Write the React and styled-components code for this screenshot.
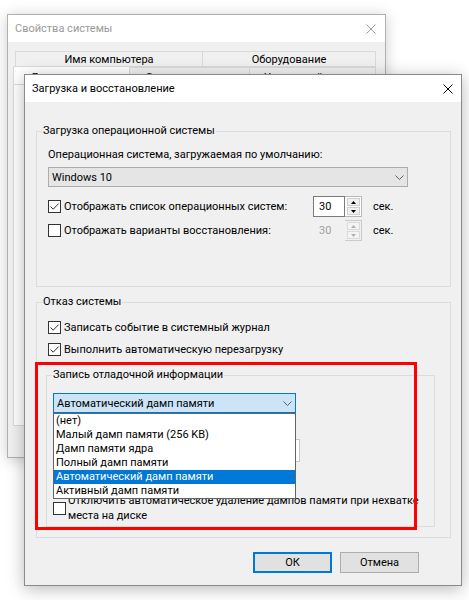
import React from 'react';
import styled, { createGlobalStyle } from 'styled-components';

const GlobalStyle = createGlobalStyle`
  * { box-sizing: border-box; }
  body {
    margin: 0;
    background: #fff;
    font-family: Roboto, "Segoe UI", sans-serif;
    font-size: 11px;
    color: #000;
  }
`;

const Desktop = styled.div`
  position: relative;
  width: 469px;
  height: 600px;
  overflow: hidden;
  background: #fff;
  white-space: nowrap;
`;

const BackWindow = styled.div`
  position: absolute;
  left: 7px;
  top: 14px;
  width: 379px;
  height: 444px;
  display: flex;
  flex-direction: column;
  background: #f0f0f0;
  border: 1px solid #b0b0b0;
  box-shadow: 0 2px 14px rgba(0, 0, 0, 0.2);
`;

const Dialog = styled.div`
  position: absolute;
  left: 24px;
  top: 74px;
  width: 438px;
  height: 512px;
  display: flex;
  flex-direction: column;
  background: #f0f0f0;
  border: 1px solid #8a8a8a;
  box-shadow: 0 3px 16px rgba(0, 0, 0, 0.28);
`;

const TitleBar = styled.div`
  flex: none;
  height: 27px;
  display: flex;
  align-items: center;
  justify-content: space-between;
  padding-left: 7px;
  background: #fff;
  color: ${p => (p.$inactive ? '#999' : '#000')};
`;

const CloseBox = styled.div`
  width: ${p => p.$w}px;
  height: 100%;
  display: flex;
  align-items: center;
  justify-content: center;
`;

const CloseIcon = ({ color }) => (
  <svg width="10" height="10" viewBox="0 0 10 10">
    <path d="M0.5 0.5 L9.5 9.5 M9.5 0.5 L0.5 9.5" stroke={color} strokeWidth="1" />
  </svg>
);

/* background window: tabs */
const TabArea = styled.div`
  padding: 9px 0 0 7px;
`;

const TabRow = styled.div`
  display: flex;
  height: ${p => p.$h}px;
  margin-left: ${p => p.$shift || 0}px;
`;

const Tab = styled.div`
  width: ${p => p.$w}px;
  display: flex;
  align-items: center;
  justify-content: center;
  background: ${p => (p.$active ? '#fff' : '#f0f0f0')};
  border: 1px solid #d9d9d9;
  margin-left: -1px;
  margin-top: ${p => (p.$active ? -1 : 0)}px;
  padding-top: ${p => (p.$low ? 3 : 0)}px;
  &:first-child { margin-left: 0; }
`;

const TabPanel = styled.div`
  margin-left: -2px;
  width: 364px;
  height: 341px;
  background: #fff;
  border: 1px solid #d9d9d9;
  border-top: none;
`;

/* dialog */
const Body = styled.div`
  position: relative;
  flex: 1;
  display: flex;
  flex-direction: column;
  padding: 21px 10px 0 11px;
`;

const Group = styled.fieldset`
  margin: ${p => p.$mt || 0}px ${p => p.$mr || 0}px 0 ${p => p.$ml || 0}px;
  padding: 0 0 ${p => p.$pb}px;
  border: 1px solid #dcdcdc;
  min-width: 0;
`;

const Legend = styled.legend`
  margin-left: 5px;
  padding: 0 1px;
  line-height: 16px;
`;

const GroupBody = styled.div`
  padding-left: ${p => p.$inset}px;
`;

const Text = styled.div`
  line-height: 16px;
  margin-top: ${p => p.$mt || 0}px;
`;

const Row = styled.div`
  display: flex;
  align-items: center;
  min-height: ${p => p.$h || 16}px;
  margin-top: ${p => p.$mt || 0}px;
`;

const LabelCell = styled.div`
  display: flex;
  align-items: center;
  width: ${p => p.$w}px;
`;

const Box = styled.span`
  flex: none;
  width: 13px;
  height: 13px;
  margin-right: ${p => p.$gap || 3}px;
  display: flex;
  align-items: center;
  justify-content: center;
  background: #fff;
  border: 1px solid #333;
`;

const Check = ({ checked, gap }) => (
  <Box $gap={gap}>
    {checked && (
      <svg width="11" height="11" viewBox="0 0 11 11">
        <path d="M1.5 5.5 L4.2 8.2 L9.6 2.6" fill="none" stroke="#333" strokeWidth="1" />
      </svg>
    )}
  </Box>
);

const Combo = styled.div`
  display: flex;
  align-items: center;
  justify-content: space-between;
  width: ${p => p.$w}px;
  height: 20px;
  margin-top: ${p => p.$mt || 0}px;
  padding: 0 3px 0 3px;
  background: ${p => (p.$focused ? '#cce4f7' : '#e5e5e5')};
  border: 1px solid ${p => (p.$focused ? '#0078d7' : '#adadad')};
`;

const Chevron = () => (
  <svg width="9" height="5" viewBox="0 0 9 5">
    <path d="M0.5 0.5 L4.5 4.5 L8.5 0.5" fill="none" stroke="#606060" strokeWidth="1" />
  </svg>
);

const ComboWrap = styled.div`
  position: relative;
  width: ${p => p.$w}px;
  margin-top: ${p => p.$mt || 0}px;
  z-index: 2;
`;

const DropList = styled.ul`
  position: absolute;
  top: 100%;
  left: 0;
  width: ${p => p.$w}px;
  margin: 0;
  padding: 0;
  list-style: none;
  background: #fff;
  border: 1px solid #646464;
`;

const Option = styled.li`
  height: 14px;
  line-height: 14px;
  padding-left: 2px;
  background: ${p => (p.$selected ? '#0078d7' : 'transparent')};
  color: ${p => (p.$selected ? '#fff' : '#000')};
`;

const Spin = styled.div`
  display: flex;
  height: 21px;
  width: 49px;
  border: 1px solid ${p => (p.$disabled ? '#cccccc' : '#b8b8b8')};
  background: ${p => (p.$disabled ? '#f0f0f0' : '#fff')};
`;

const SpinField = styled.div`
  width: 32px;
  padding-left: 5px;
  display: flex;
  align-items: center;
  border: 1px solid ${p => (p.$disabled ? 'transparent' : '#7a7a7a')};
  margin: -1px 0 -1px -1px;
  color: ${p => (p.$disabled ? '#a0a0a0' : '#000')};
  background: ${p => (p.$disabled ? '#f0f0f0' : '#fff')};
`;

const SpinButtons = styled.div`
  flex: 1;
  display: flex;
  flex-direction: column;
  gap: 1px;
  padding: 1px 1px 1px 2px;
`;

const SpinButton = styled.div`
  flex: 1;
  display: flex;
  align-items: center;
  justify-content: center;
  background: ${p => (p.$disabled ? '#f4f4f4' : '#f0f0f0')};
  border: 1px solid ${p => (p.$disabled ? '#dadada' : '#cfcfcf')};
`;

const Arrow = ({ down, color }) => (
  <svg width="5" height="3" viewBox="0 0 5 3">
    <path d={down ? 'M0 0 H5 L2.5 3 Z' : 'M0 3 H5 L2.5 0 Z'} fill={color} />
  </svg>
);

const Spinner = ({ value, disabled }) => {
  const color = disabled ? '#b0b0b0' : '#000';
  return (
    <Spin $disabled={disabled}>
      <SpinField $disabled={disabled}>{value}</SpinField>
      <SpinButtons>
        <SpinButton $disabled={disabled}><Arrow color={color} /></SpinButton>
        <SpinButton $disabled={disabled}><Arrow down color={color} /></SpinButton>
      </SpinButtons>
    </Spin>
  );
};

const Unit = styled.span`
  margin-left: 11px;
`;

// dump file field, almost entirely under the open list
const TextField = styled.div`
  width: ${p => p.$w}px;
  height: 23px;
  margin-top: ${p => p.$mt || 0}px;
  background: #fff;
  border: 1px solid #c8c8c8;
`;

const Wrap = styled.div`
  line-height: 15px;
`;

const ButtonRow = styled.div`
  display: flex;
  justify-content: flex-end;
  gap: 8px;
  margin-top: 14px;
  padding-right: 32px;
`;

const Button = styled.button`
  width: 79px;
  height: 21px;
  padding: 0;
  font: inherit;
  color: #000;
  background: #e1e1e1;
  border: ${p => (p.$primary ? '2px solid #0078d7' : '1px solid #adadad')};
`;

const Highlight = styled.div`
  position: absolute;
  left: 10px;
  top: 260px;
  width: 382px;
  height: 168px;
  border: 3px solid #ff0000;
  pointer-events: none;
  z-index: 3;
`;

const dumpOptions = [
  '(нет)',
  'Малый дамп памяти (256 KB)',
  'Дамп памяти ядра',
  'Полный дамп памяти',
  'Автоматический дамп памяти',
  'Активный дамп памяти',
];

export default function App() {
  return (
    <Desktop>
      <GlobalStyle />
      <BackWindow>
        <TitleBar $inactive>
          <span>Свойства системы</span>
          <CloseBox $w={28}><CloseIcon color="#999" /></CloseBox>
        </TitleBar>
        <TabArea>
          <TabRow $h={16}>
            <Tab $w={188}>Имя компьютера</Tab>
            <Tab $w={174}>Оборудование</Tab>
          </TabRow>
          <TabRow $h={18} $shift={-2}>
            <Tab $w={117} $active $low>Дополнительно</Tab>
            <Tab $w={121} $low>Защита системы</Tab>
            <Tab $w={127} $low>Удаленный доступ</Tab>
          </TabRow>
          <TabPanel />
        </TabArea>
      </BackWindow>

      <Dialog>
        <TitleBar>
          <span>Загрузка и восстановление</span>
          <CloseBox $w={26}><CloseIcon color="#000" /></CloseBox>
        </TitleBar>
        <Body>
          <Group $pb={45}>
            <Legend>Загрузка операционной системы</Legend>
            <GroupBody $inset={11}>
              <Text $mt={8}>Операционная система, загружаемая по умолчанию:</Text>
              <Combo $w={360} $mt={4}>
                <span>Windows 10</span>
                <Chevron />
              </Combo>
              <Row $h={21} $mt={9}>
                <LabelCell $w={265}>
                  <Check checked />
                  Отображать список операционных систем:
                </LabelCell>
                <Spinner value="30" />
                <Unit>сек.</Unit>
              </Row>
              <Row $h={21} $mt={3}>
                <LabelCell $w={265}>
                  <Check />
                  Отображать варианты восстановления:
                </LabelCell>
                <Spinner value="30" disabled />
                <Unit>сек.</Unit>
              </Row>
            </GroupBody>
          </Group>

          <Group $mt={7} $pb={10}>
            <Legend>Отказ системы</Legend>
            <GroupBody $inset={11}>
              <Row $mt={9}>
                <Check checked />
                Записать событие в системный журнал
              </Row>
              <Row $mt={6}>
                <Check checked />
                Выполнить автоматическую перезагрузку
              </Row>
              <Group $mt={10} $ml={-2} $mr={15} $pb={3}>
                <Legend>Запись отладочной информации</Legend>
                <GroupBody $inset={6}>
                  <ComboWrap $w={243} $mt={10}>
                    <Combo $w={243} $focused>
                      <span>Автоматический дамп памяти</span>
                      <Chevron />
                    </Combo>
                    <DropList $w={243}>
                      {dumpOptions.map(o => (
                        <Option key={o} $selected={o === 'Автоматический дамп памяти'}>{o}</Option>
                      ))}
                    </DropList>
                  </ComboWrap>
                  <TextField $w={247} $mt={26} />
                  <Row $h={30} $mt={31}>
                    <Check gap={2} />
                    <Wrap>
                      Отключить автоматическое удаление дампов памяти при нехватке
                      <br />
                      места на диске
                    </Wrap>
                  </Row>
                </GroupBody>
              </Group>
            </GroupBody>
          </Group>

          <ButtonRow>
            <Button $primary>ОК</Button>
            <Button>Отмена</Button>
          </ButtonRow>
          <Highlight />
        </Body>
      </Dialog>
    </Desktop>
  );
}
